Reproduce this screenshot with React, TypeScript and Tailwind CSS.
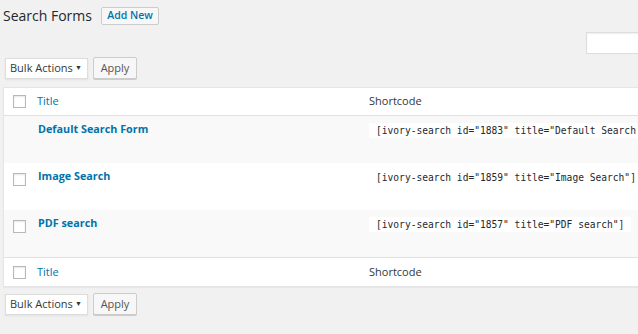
import React from "react";

const rows = [
  { title: "Default Search Form", code: '[ivory-search id="1883" title="Default Search Form"]', check: false },
  { title: "Image Search", code: '[ivory-search id="1859" title="Image Search"]', check: true },
  { title: "PDF search", code: '[ivory-search id="1857" title="PDF search"]', check: true },
];

function Checkbox() {
  return <div className="h-[13px] w-[13px] border border-[#b4b9be] bg-white shadow-[inset_0_1px_2px_rgba(0,0,0,0.1)]" />;
}

function BulkBar() {
  return (
    <div className="flex items-center gap-[5px] pl-[5px]">
      <div className="flex h-[21px] w-[83px] items-center justify-between whitespace-nowrap border border-[#ddd] bg-white pl-[4px] pr-[5px] text-[11px] text-[#32373c] shadow-[0_1px_2px_rgba(0,0,0,0.07)]">
        <span>Bulk Actions</span>
        <span className="text-[7px]">▼</span>
      </div>
      <button className="h-[22px] w-[44px] rounded-[2px] border border-[#ccc] bg-[#f7f7f7] text-[11px] text-[#555] shadow-[0_1px_0_#ccc]">
        Apply
      </button>
    </div>
  );
}

export default function App() {
  return (
    <div className="h-[334px] w-[638px] overflow-hidden bg-[#f1f1f1] font-['Open_Sans',sans-serif] text-[#23282d]">
      <div className="flex items-center pl-[3px] pt-[6px]">
        <h1 className="whitespace-nowrap text-[14px] leading-[20px] text-[#23282d]">Search Forms</h1>
        <button className="ml-[9px] h-[18px] w-[58px] shrink-0 rounded-[2px] border border-[#ccc] bg-[#f7f7f7] text-[10.5px] font-semibold text-[#0073aa]">
          Add New
        </button>
      </div>

      <div className="mt-[6px] flex justify-end">
        <div className="mr-[-10px] h-[22px] w-[62px] shrink-0 border border-[#ddd] bg-white shadow-[inset_0_1px_2px_rgba(0,0,0,0.07)]" />
      </div>

      <div className="mt-[3px]">
        <BulkBar />
      </div>

      <div className="ml-[3px] mt-[8px] w-[660px] border border-[#e5e5e5] bg-white shadow-[0_1px_1px_rgba(0,0,0,0.04)]">
        <div className="flex h-[28px] items-center border-b border-[#e1e1e1] text-[11px]">
          <div className="w-[33px] shrink-0 pl-[9px]">
            <Checkbox />
          </div>
          <div className="w-[332px] shrink-0 text-[#0073aa]">Title</div>
          <div className="text-[#32373c]">Shortcode</div>
        </div>
        {rows.map((r, i) => (
          <div key={r.title} className={`flex h-[47px] items-start ${i % 2 === 0 ? "bg-[#f9f9f9]" : "bg-white"}`}>
            <div className="w-[34px] shrink-0 pl-[9px] pt-[10px]">{r.check && <Checkbox />}</div>
            <div className="w-[331px] shrink-0 whitespace-nowrap pt-[5px] text-[10.8px] font-bold text-[#0073aa]">{r.title}</div>
            <div className="shrink-0 pt-[7px]">
              <code className="block h-[15px] whitespace-nowrap bg-white px-[7px] font-['DejaVu_Sans_Mono',monospace] text-[9.6px] leading-[15px] text-[#23282d]">
                {r.code}
              </code>
            </div>
          </div>
        ))}
        <div className="flex h-[29px] items-center border-t border-[#e1e1e1] text-[11px]">
          <div className="w-[33px] shrink-0 pl-[9px]">
            <Checkbox />
          </div>
          <div className="w-[332px] shrink-0 text-[#0073aa]">Title</div>
          <div className="text-[#32373c]">Shortcode</div>
        </div>
      </div>

      <div className="mt-[6px]">
        <BulkBar />
      </div>
    </div>
  );
}
